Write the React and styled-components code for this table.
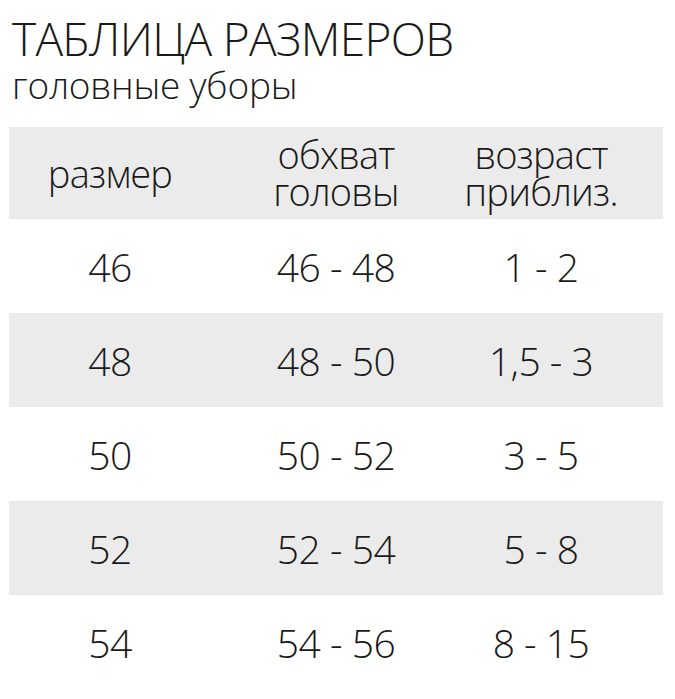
import styled, { createGlobalStyle } from 'styled-components'

const Global = createGlobalStyle`
    body {
        margin: 0;
        background: #ffffff;
        font-family: "Open Sans", "Noto Sans", sans-serif;
        color: #1a1a1a;
    }
`

const Page = styled.div`
    width: 675px;
    height: 699px;
    padding: 10px 12px 0 9px;
    box-sizing: border-box;
`
const Title = styled.h1`
    margin: 0 0 0 3px;
    font-size: 46px;
    font-weight: 300;
    line-height: 56px;
    letter-spacing: -0.7px;
`
const Subtitle = styled.h2`
    margin: -4px 0 0 3px;
    font-size: 37px;
    font-weight: 300;
    line-height: 46px;
    letter-spacing: -0.2px;
`
const Table = styled.div`
    margin-top: 19px;
    width: 654px;
`
const Row = styled.div`
    display: grid;
    grid-template-columns: 202px 250px 160px 1fr;
    align-items: center;
    height: ${p => p.$h}px;
    background: ${p => (p.$shaded ? '#ebebeb' : 'transparent')};
`
const HeadCell = styled.div`
    text-align: center;
    font-size: 38px;
    font-weight: 350;
    line-height: 37px;
    letter-spacing: -0.8px;
`
const Cell = styled.div`
    text-align: center;
    font-size: 39px;
    font-weight: 300;
    letter-spacing: -0.5px;
`

const rows = [
    ['46', '46 - 48', '1 - 2'],
    ['48', '48 - 50', '1,5 - 3'],
    ['50', '50 - 52', '3 - 5'],
    ['52', '52 - 54', '5 - 8'],
    ['54', '54 - 56', '8 - 15'],
]

const App = () => (
    <Page>
        <Global />
        <Title>ТАБЛИЦА РАЗМЕРОВ</Title>
        <Subtitle>головные уборы</Subtitle>
        <Table>
            <Row $h={92} $shaded>
                <HeadCell>размер</HeadCell>
                <HeadCell>обхват<br />головы</HeadCell>
                <HeadCell>возраст<br />приблиз.</HeadCell>
            </Row>
            {rows.map((r, i) => (
                <Row key={r[0]} $h={94} $shaded={i % 2 === 1}>
                    {r.map(v => <Cell key={v}>{v}</Cell>)}
                </Row>
            ))}
        </Table>
    </Page>
)

export default App
